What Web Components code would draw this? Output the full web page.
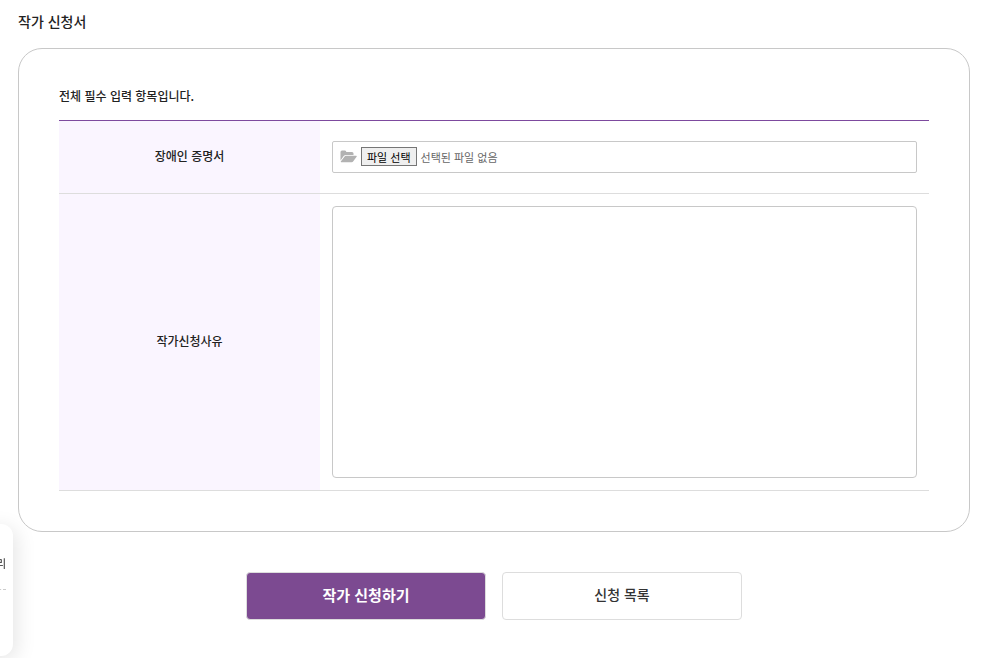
<!DOCTYPE html>
<html lang="ko">
<head>
<meta charset="utf-8">
<meta name="viewport" content="width=device-width, initial-scale=1">
<title>작가 신청서</title>
<style>
  body {
    margin: 0;
    padding: 12px 16px 0 18px;
    background: #fff;
    color: #222;
    font-family: "Noto Sans CJK KR", "Noto Sans", sans-serif;
    font-size: 12px;
    overflow: hidden;
  }
</style>
</head>
<body>

<apply-page heading="작가 신청서">
  <apply-form></apply-form>
  <action-button slot="actions" primary>작가 신청하기</action-button>
  <action-button slot="actions">신청 목록</action-button>
</apply-page>
<quick-menu>리</quick-menu>

<template id="apply-page">
  <style>
    :host {
      display: block;
    }
    h1 {
      margin: 0 0 18px;
      font-size: 14px;
      line-height: 18px;
      font-weight: 500;
    }
    .panel {
      padding: 40px;
      border: 1px solid #c8c8c8;
      border-radius: 24px;
    }
    .actions {
      display: flex;
      justify-content: center;
      gap: 16px;
      padding: 40px 0;
    }
  </style>
  <h1></h1>
  <div class="panel"><slot></slot></div>
  <div class="actions"><slot name="actions"></slot></div>
</template>

<template id="apply-form">
  <style>
    :host {
      display: block;
    }
    p {
      margin: 0 0 17px;
      line-height: 14px;
      font-weight: 500;
    }
    table {
      width: 100%;
      border-collapse: separate;
      border-spacing: 0;
      border-top: 1px solid #7d4a9e;
      table-layout: fixed;
    }
    th, td {
      padding: 12px;
      border-bottom: 1px solid #ddd;
      vertical-align: middle;
    }
    th {
      width: 30%;
      box-sizing: border-box;
      padding-bottom: 14px;
      background: #faf5ff;
      font-weight: 500;
      line-height: 16px;
    }
    .file td {
      padding: 20px 12px;
    }
    textarea {
      display: block;
      box-sizing: border-box;
      width: 100%;
      height: 272px;
      padding: 8px;
      border: 1px solid #c8c8c8;
      border-radius: 4px;
      background: #fff;
      color: inherit;
      font: inherit;
      resize: none;
    }
  </style>
  <p>전체 필수 입력 항목입니다.</p>
  <table>
    <tr class="file">
      <th scope="row"><label for="certificate">장애인 증명서</label></th>
      <td><file-field id="certificate" name="certificate"></file-field></td>
    </tr>
    <tr>
      <th scope="row"><label for="reason">작가신청사유</label></th>
      <td><textarea id="reason" name="reason"></textarea></td>
    </tr>
  </table>
</template>

<template id="file-field">
  <style>
    :host {
      display: flex;
      align-items: center;
      gap: 4px;
      box-sizing: border-box;
      height: 32px;
      padding: 0 7px 1px;
      border: 1px solid #c8c8c8;
      border-radius: 2px;
      font-size: 11px;
      line-height: 16px;
      color: #666;
    }
    svg {
      width: 17px;
      height: 13px;
      fill: #b2b2b2;
    }
    button {
      box-sizing: border-box;
      height: 19px;
      padding: 0 5px;
      border: 1px solid #767676;
      border-radius: 0;
      background: #efefef;
      color: #000;
      font: inherit;
    }
  </style>
  <svg viewBox="0 0 17 13" aria-hidden="true">
    <path d="M.5 10.400V2Q.5.500 2 .500H5Q6.300.500 6.300 2H12Q13.500 2 13.500 3.500V5H6Q4.600 5 3.700 6.100Z"/>
    <path d="M4.600 6.500Q5.200 5.800 6 5.800H16.200Q17.200 5.800 16.600 6.700L13.300 11.300Q12.700 12.200 11.700 12.200H1.300Q.3 12.200 1 11.200Z"/>
  </svg>
  <input type="file" hidden aria-label="파일">
  <button type="button">파일 선택</button>
  <span class="name">선택된 파일 없음</span>
</template>

<template id="action-button">
  <style>
    :host {
      display: block;
      flex: 0 1 240px;
    }
    button {
      display: block;
      box-sizing: border-box;
      width: 100%;
      height: 48px;
      padding: 0 12px 4px;
      border: 1px solid #ddd;
      border-radius: 4px;
      background: #fff;
      color: #333;
      font: inherit;
      font-size: 14px;
      font-weight: 500;
      cursor: pointer;
    }
    :host([primary]) button {
      background: #7c4a91;
      color: #fff;
      font-size: 15px;
      font-weight: 700;
    }
  </style>
  <button type="button"><slot></slot></button>
</template>

<template id="quick-menu">
  <style>
    /* slides out from the left edge, only its right side shows */
    :host {
      position: fixed;
      left: -67px;
      bottom: 2px;
      box-sizing: border-box;
      width: 80px;
      height: 132px;
      padding: 14px 7px;
      border-radius: 12px;
      background: #fff;
      box-shadow: 4px 4px 20px rgba(0, 0, 0, .1);
      font-size: 11px;
      text-align: right;
    }
    div {
      height: 51px;
      line-height: 50px;
      border-bottom: 1px dashed #ccc;
    }
  </style>
  <div><slot></slot></div>
</template>

<script>
class BaseElement extends HTMLElement {
  constructor() {
    super()
    const template = document.getElementById(this.localName)
    this.attachShadow({ mode: 'open' })
    this.shadowRoot.appendChild(template.content.cloneNode(true))
  }
}

class ApplyPage extends BaseElement {
  connectedCallback() {
    this.shadowRoot.querySelector('h1').textContent = this.getAttribute('heading')
  }
}

class ApplyForm extends BaseElement {}

class FileField extends BaseElement {
  // lets a <label for> in the form point at this element
  static get formAssociated() {
    return true
  }

  constructor() {
    super()
    this.internals = this.attachInternals()
    this.$input = this.shadowRoot.querySelector('input')
    this.$button = this.shadowRoot.querySelector('button')
    this.$name = this.shadowRoot.querySelector('.name')

    this.$button.addEventListener('click', () => this.$input.click())
    this.$input.addEventListener('change', () => {
      const file = this.$input.files[0]
      this.$name.textContent = file ? file.name : '선택된 파일 없음'
      this.internals.setFormValue(file || null)
    })
  }

  focus() {
    this.$button.focus()
  }
}

class ActionButton extends BaseElement {}

class QuickMenu extends BaseElement {}

customElements.define('apply-page', ApplyPage)
customElements.define('apply-form', ApplyForm)
customElements.define('file-field', FileField)
customElements.define('action-button', ActionButton)
customElements.define('quick-menu', QuickMenu)
</script>
</body>
</html>
